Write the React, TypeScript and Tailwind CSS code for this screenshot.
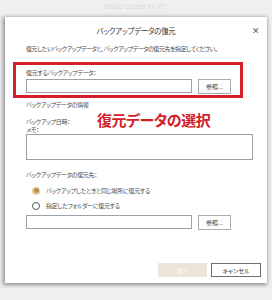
import React from "react";

const jp = "[font-family:'Noto_Sans_CJK_JP','Noto_Sans',sans-serif] [font-feature-settings:'palt']";

function Browse() {
  return (
    <div className="ml-[6px] w-[33px] h-[15px] border border-[#adadad] bg-[#fdfdfd] flex items-center justify-center text-[6px] leading-none text-[#444]">
      参照...
    </div>
  );
}

function Radio({ checked }: { checked?: boolean }) {
  return checked ? (
    <div className="w-[8px] h-[8px] rounded-full bg-[#e3cfa5] flex items-center justify-center">
      <div className="w-[5px] h-[5px] rounded-full bg-[#b98f4c]" />
    </div>
  ) : (
    <div className="w-[8px] h-[8px] rounded-full border border-[#555] bg-white" />
  );
}

export default function App() {
  return (
    <div className={`w-[272px] h-[300px] bg-[#efefef] overflow-hidden ${jp} text-[#4a4a4a]`}>
      <div className="h-[15px] flex items-center justify-center text-[7px] text-[#dadada] [font-family:'Liberation_Sans',sans-serif]">
        Music Center for PC
      </div>
      <div className="mt-[2px] ml-[5px] w-[262px] h-[266px] bg-white relative flex flex-col shadow-[-1px_1px_4px_1px_rgba(0,0,0,0.4)]">
        <div className="h-[27px] flex items-center justify-center text-[7.5px] tracking-[-0.3px] text-[#333]">
          バックアップデータの復元
        </div>
        <div className="absolute right-[7px] top-[9px] text-[9px] leading-none text-[#666]">✕</div>
        <div className="h-[10px] leading-[10px] pl-[21px] text-[6px] tracking-[-0.45px]">
          復元したいバックアップデータと、バックアップデータの復元先を指定してください。
        </div>
        <div className="mt-[8px] ml-[8px] w-[230px] h-[36px] border-[3px] border-[#d3202b] flex flex-col pl-[10px]">
          <div className="pt-[3px] leading-[10px] text-[6px] tracking-[-0.3px]">復元するバックアップデータ：</div>
          <div className="mt-[1px] flex">
            <div className="w-[166px] h-[14px] border border-[#a0a0a0] bg-white" />
            <Browse />
          </div>
        </div>
        <div className="mt-[2px] pl-[21px] leading-[10px] text-[6px] tracking-[-0.3px]">バックアップデータの情報</div>
        <div className="mt-[8px] pl-[21px] leading-[8px] text-[6px] tracking-[-0.3px]">バックアップ日時：</div>
        <div className="pl-[21px] leading-[8px] text-[6px] tracking-[-0.3px]">メモ：</div>
        <div className="ml-[21px] w-[227px] h-[26px] border border-[#a0a0a0] bg-white" />
        <div className="mt-[10px] pl-[21px] leading-[10px] text-[6px] tracking-[-0.3px]">バックアップデータの復元先：</div>
        <div className="mt-[3px] ml-[27px] h-[15px] flex items-center gap-[6px]">
          <Radio checked />
          <span className="text-[6px] tracking-[-0.3px]">バックアップしたときと同じ場所に復元する</span>
        </div>
        <div className="ml-[27px] h-[15px] flex items-center gap-[6px]">
          <Radio />
          <span className="text-[6px] tracking-[-0.3px]">指定したフォルダーに復元する</span>
        </div>
        <div className="mt-[2px] ml-[21px] flex">
          <div className="w-[166px] h-[14px] border border-[#a0a0a0] bg-white" />
          <Browse />
        </div>
        <div className="mt-auto mb-[6px] mr-[6px] flex justify-end gap-[4px]">
          <div className="w-[49px] h-[14px] bg-[#ece5da] flex items-center justify-center text-[6px] text-[#fff]">次へ</div>
          <div className="w-[50px] h-[14px] border border-[#6e6e6e] bg-white flex items-center justify-center text-[6px] text-[#333]">キャンセル</div>
        </div>
        <div className="absolute left-[92px] top-[95px] text-[15px] font-bold leading-none text-[#d3202b] tracking-[-0.5px]">
          復元データの選択
        </div>
      </div>
    </div>
  );
}
